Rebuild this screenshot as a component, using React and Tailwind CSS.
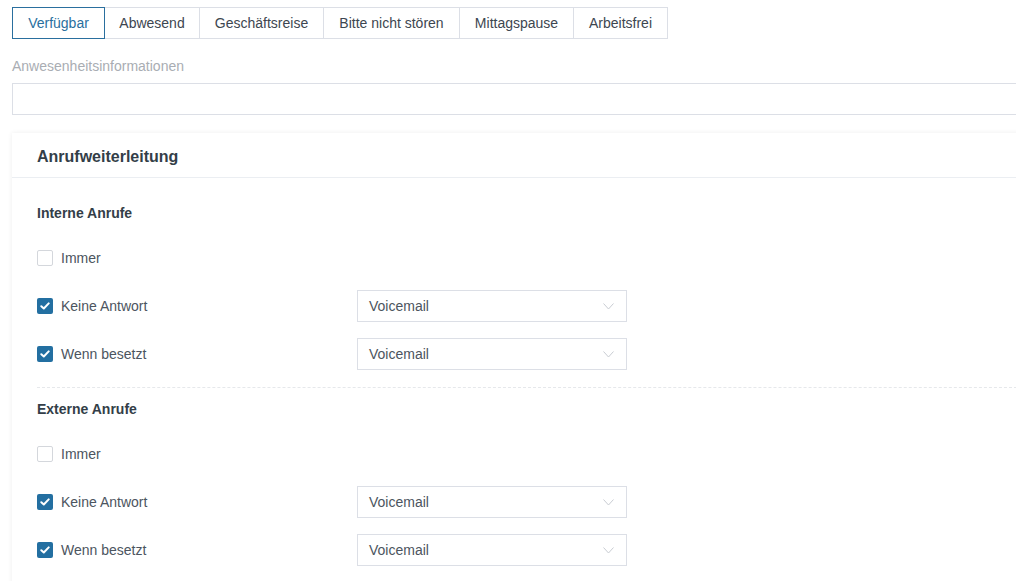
import React from 'react';

const tabs = [
  { label: 'Verfügbar', w: 'w-[93px]', active: true },
  { label: 'Abwesend', w: 'w-[96px]' },
  { label: 'Geschäftsreise', w: 'w-[125px]' },
  { label: 'Bitte nicht stören', w: 'w-[137px]' },
  { label: 'Mittagspause', w: 'w-[115px]' },
  { label: 'Arbeitsfrei', w: 'w-[95px]' },
];

const Checkbox = ({ checked }) =>
  checked ? (
    <span className="flex h-4 w-4 items-center justify-center rounded-[2px] bg-[#236fa1]">
      <svg width="10" height="8" viewBox="0 0 10 8" fill="none">
        <path d="M1.3 4.2 3.8 6.5 8.7 1.4" stroke="#fff" strokeWidth="2" strokeLinecap="round" strokeLinejoin="round" />
      </svg>
    </span>
  ) : (
    <span className="h-4 w-4 rounded-[2px] border border-[#d4d7dc] bg-white" />
  );

const Select = ({ value }) => (
  <div className="flex h-8 w-[270px] items-center justify-between border border-[#dcdfe6] bg-white pl-[11px] pr-[12px] text-[14px] text-[#4c5560]">
    <span>{value}</span>
    <svg width="11" height="7" viewBox="0 0 11 7" fill="none">
      <path d="M0.5 0.5 5.5 6 10.5 0.5" stroke="#c8ccd2" strokeWidth="1" />
    </svg>
  </div>
);

const Row = ({ label, checked, select }) => (
  <div className="flex h-12 items-center">
    <div className="flex w-[320px] items-center gap-2">
      <Checkbox checked={checked} />
      <span className="text-[14px] text-[#4c5560]">{label}</span>
    </div>
    {select && <Select value="Voicemail" />}
  </div>
);

const Group = ({ title }) => (
  <div>
    <div className="text-[14px] font-bold leading-5 text-[#333e48]">{title}</div>
    <div className="mt-[11px]">
      <Row label="Immer" />
      <Row label="Keine Antwort" checked select />
      <Row label="Wenn besetzt" checked select />
    </div>
  </div>
);

export default function App() {
  return (
    <div className="h-[581px] w-[1016px] overflow-hidden bg-white pl-3 pt-[7px] font-['Liberation_Sans',Arial,sans-serif]">
      {/* Status tabs */}
      <div className="flex">
        {tabs.map((t, i) => (
          <div
            key={t.label}
            className={`${t.w} flex h-8 items-center justify-center border text-[14px] ${i > 0 ? '-ml-px' : ''} ${
              t.active ? 'relative z-10 border-[#2a6f9e] text-[#2a6f9e]' : 'border-[#dcdfe6] text-[#3d4650]'
            }`}
          >
            {t.label}
          </div>
        ))}
      </div>

      <div className="mt-[17px] text-[14px] leading-5 text-[#a9adb3]">Anwesenheitsinformationen</div>
      <div className="mt-[7px] h-8 w-[1040px] border border-[#dcdfe6] bg-white" />

      {/* Call forwarding card */}
      <div className="mt-[18px] w-[1040px] bg-white pb-10 shadow-[0_0_5px_rgba(0,0,0,0.07)]">
        <div className="flex h-[45px] items-center border-b border-[#ebeef2] px-[25px] pt-[3px]">
          <span className="text-[16px] font-bold text-[#333e48]">Anrufweiterleitung</span>
        </div>
        <div className="px-[25px] pt-[25px]">
          <Group title="Interne Anrufe" />
          <div className="mb-[11px] mt-[9px] border-t border-dashed border-[#e6e8eb]" />
          <Group title="Externe Anrufe" />
        </div>
      </div>
    </div>
  );
}
